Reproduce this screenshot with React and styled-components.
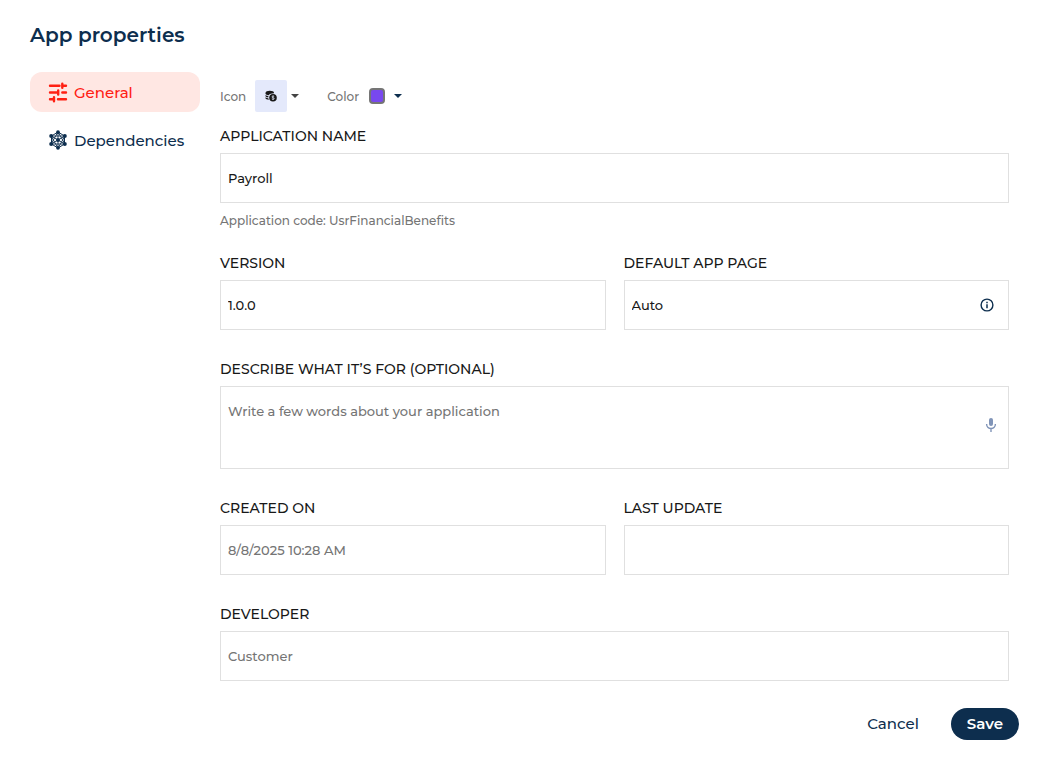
import React from 'react';
import styled, { createGlobalStyle } from 'styled-components';

const GlobalStyle = createGlobalStyle`
  *, *::before, *::after {
    box-sizing: border-box;
  }
  body {
    margin: 0;
    background: #fff;
  }
  body, button, input, select, textarea {
    font-family: Montserrat, Inter, sans-serif;
  }
`;

const Page = styled.div`
  padding: 20px 30px 28px;
  color: #0d2e4e;
`;

const Title = styled.h1`
  margin: 0 0 22px;
  font-size: 20px;
  line-height: 30px;
  font-weight: 600;
`;

const Body = styled.div`
  display: flex;
  gap: 20px;
  padding-right: 10px;
`;

const Nav = styled.nav`
  display: flex;
  flex: none;
  flex-direction: column;
  gap: 8px;
  width: 170px;
`;

const NavLink = styled.a`
  display: flex;
  align-items: center;
  gap: 4px;
  height: 40px;
  padding-left: 18px;
  border-radius: 12px;
  font-size: 15px;
  font-weight: 500;
  text-decoration: none;
  color: ${props => (props.$active ? '#ff2013' : '#0d2e4e')};
  background: ${props => (props.$active ? '#ffe7e3' : 'transparent')};
`;

const Form = styled.form`
  display: flex;
  flex: 1;
  flex-direction: column;
  gap: 22px;
  min-width: 0;
  padding-top: 8px;
`;

const Appearance = styled.div`
  display: flex;
  align-items: center;
  gap: 28px;
  height: 32px;
  margin-bottom: -7px;
`;

const Picker = styled.div`
  display: flex;
  align-items: center;
  gap: ${props => props.$gap}px;
  font-size: 12px;
  font-weight: 500;
  color: #757575;
`;

const PickerButton = styled.button`
  display: flex;
  align-items: center;
  gap: ${props => props.$gap}px;
  padding: 0;
  border: 0;
  background: none;
  color: ${props => props.$color};
`;

const IconTile = styled.span`
  display: flex;
  align-items: center;
  justify-content: center;
  width: 32px;
  height: 32px;
  border-radius: 2px;
  background: #e4e9fb;
`;

const Swatch = styled.span`
  width: 16px;
  height: 16px;
  border: 2px solid #757575;
  border-radius: 4px;
  background: #7848ee;
`;

const Columns = styled.div`
  display: grid;
  grid-template-columns: 1fr 1fr;
  gap: 18px;
`;

const Field = styled.div`
  display: flex;
  flex-direction: column;
  gap: 7px;
  padding-bottom: ${props => (props.$hinted ? 0 : 8)}px;
`;

const Label = styled.label`
  font-size: 14px;
  line-height: 19px;
  font-weight: 500;
  color: #181818;
`;

const Box = styled.div`
  display: flex;
  align-items: ${props => (props.$tall ? 'stretch' : 'center')};
  height: ${props => (props.$tall ? 83 : 50)}px;
  padding-right: ${props => (props.$tall ? 10 : 14)}px;
  border: 1px solid #e0e0e0;
`;

const control = `
  flex: 1;
  min-width: 0;
  height: 100%;
  margin: 0;
  border: 0;
  outline: 0;
  background: transparent;
  font-size: 13px;
  line-height: 18px;
  font-weight: 500;
  &::placeholder {
    color: #757575;
    opacity: 1;
  }
`;

const Input = styled.input`
  ${control}
  padding: 0 7px;
  color: ${props => (props.readOnly ? '#757575' : '#181818')};
`;

const Select = styled.select`
  ${control}
  appearance: none;
  padding: 0 7px;
  color: #181818;
`;

const TextArea = styled.textarea`
  ${control}
  padding: 15px 7px;
  resize: none;
  color: #181818;
`;

const BoxButton = styled.button`
  display: flex;
  flex: none;
  align-items: center;
  padding: 0;
  border: 0;
  background: none;
  color: #0d2e4e;
`;

const MicButton = styled(BoxButton)`
  align-items: flex-start;
  padding-top: 30px;
  color: #8094b8;
`;

const Hint = styled.div`
  font-size: 12px;
  line-height: 22px;
  font-weight: 500;
  color: #757575;
`;

const Footer = styled.footer`
  display: flex;
  justify-content: flex-end;
  gap: 16px;
  margin-top: 19px;
`;

const Button = styled.button`
  height: 32px;
  padding: 0 16px 2px;
  border: 0;
  border-radius: 16px;
  font-size: 15px;
  font-weight: ${props => (props.$primary ? 600 : 500)};
  color: ${props => (props.$primary ? '#fff' : '#0d2e4e')};
  background: ${props => (props.$primary ? '#0d2e4e' : 'transparent')};
`;

const TuneIcon = () => (
  <svg width="22" height="22" viewBox="0 -1 22 22" fill="none" stroke="currentColor" strokeWidth="2.4" strokeLinecap="round" aria-hidden="true">
    <path d="M2 3.700h9.500M14.300 1.700v4M14.500 3.700H18M2 10.500h8M10.200 8.500v4M14.300 10.500H18M2 17.300h3.500M6 15.300v4M10 17.300h8" />
  </svg>
);

const GraphIcon = () => (
  <svg width="22" height="22" viewBox="0 -1 22 22" fill="currentColor" stroke="currentColor" aria-hidden="true">
    <path d="M10 2 16.500 6v8L10 18 3.500 14V6z" fill="none" strokeWidth="1" />
    <path d="M10 2v16M3 6l14 8M17 6 3 14M10 2 3 14h14zM10 18 3 6h14z" fill="none" strokeWidth=".9" />
    <g stroke="none">
      <circle cx="10" cy="2.200" r="1.900" />
      <circle cx="16.800" cy="6" r="2" />
      <circle cx="16.800" cy="14" r="2" />
      <circle cx="10" cy="17.800" r="1.900" />
      <circle cx="3.200" cy="14" r="2" />
      <circle cx="3.200" cy="6" r="2" />
      <circle cx="10" cy="10" r="2" />
    </g>
  </svg>
);

const PayrollIcon = () => (
  <svg width="12" height="12" viewBox="0 0 12 12" aria-hidden="true">
    <path d="M.5 3C.5 1.500 2.500.8 4.800.8S9 1.500 9 2.700v.6C6.500 3.300 4.500 4 3.800 5.200 2 5 .5 4.500.5 3.700zM.5 5c.8.6 1.800.9 2.900 1L3.200 7.400C1.700 7.200.5 6.700.5 6zM.5 7.300c.8.6 1.700.8 2.800 1l.6 1.400C2 9.500.5 9 .5 8.300z" fill="#181818" />
    <circle cx="8" cy="7.700" r="3.800" fill="#181818" />
    <path d="M9.200 6.600c-.5-.7-2.300-.6-2.300.3 0 1.100 2.300.6 2.300 1.700 0 .9-1.800 1-2.400.3M8 5.400v4.600" fill="none" stroke="#e4e9fb" strokeWidth=".7" />
  </svg>
);

const Caret = () => (
  <svg width="8" height="4" viewBox="0 0 8 4" fill="currentColor" aria-hidden="true">
    <path d="M0 0h8L4 4z" />
  </svg>
);

const InfoIcon = () => (
  <svg width="14" height="14" viewBox="0 0 14 14" fill="none" stroke="currentColor" strokeWidth="1.400" aria-hidden="true">
    <circle cx="7" cy="7" r="5.900" />
    <path d="M7 6.300v4M7 3.700v1.500" strokeWidth="1.500" />
  </svg>
);

const MicIcon = () => (
  <svg width="14" height="16" viewBox="0 0 14 16" fill="none" stroke="currentColor" aria-hidden="true">
    <rect x="5" y="1" width="4" height="8" rx="2" fill="currentColor" stroke="none" />
    <path d="M2.600 7c0 6 8.800 6 8.800 0M7 11.500V15" strokeWidth="1.400" />
  </svg>
);

const TextField = ({ id, label, hint, ...rest }) => (
  <Field $hinted={!!hint}>
    <Label htmlFor={id}>{label}</Label>
    <Box>
      <Input id={id} type="text" {...rest} />
    </Box>
    {hint && <Hint>{hint}</Hint>}
  </Field>
);

const App = () => (
  <>
    <GlobalStyle />
    <Page>
      <Title>App properties</Title>
      <Body>
        <Nav>
          <NavLink href="#general" $active>
            <TuneIcon />
            General
          </NavLink>
          <NavLink href="#dependencies">
            <GraphIcon />
            Dependencies
          </NavLink>
        </Nav>
        <Form id="properties" onSubmit={e => e.preventDefault()}>
          <Appearance>
            <Picker $gap={9}>
              <span id="icon-label">Icon</span>
              <PickerButton type="button" aria-labelledby="icon-label" $gap={4} $color="#444">
                <IconTile><PayrollIcon /></IconTile>
                <Caret />
              </PickerButton>
            </Picker>
            <Picker $gap={10}>
              <span id="color-label">Color</span>
              <PickerButton type="button" aria-labelledby="color-label" $gap={9} $color="#0d2e4e">
                <Swatch />
                <Caret />
              </PickerButton>
            </Picker>
          </Appearance>
          <TextField
            id="name"
            label="APPLICATION NAME"
            defaultValue="Payroll"
            hint="Application code: UsrFinancialBenefits"
          />
          <Columns>
            <TextField id="version" label="VERSION" defaultValue="1.0.0" />
            <Field>
              <Label htmlFor="page">DEFAULT APP PAGE</Label>
              <Box>
                <Select id="page" defaultValue="auto">
                  <option value="auto">Auto</option>
                </Select>
                <BoxButton type="button" aria-label="About the default page"><InfoIcon /></BoxButton>
              </Box>
            </Field>
          </Columns>
          <Field>
            <Label htmlFor="description">DESCRIBE WHAT IT’S FOR (OPTIONAL)</Label>
            <Box $tall>
              <TextArea id="description" placeholder="Write a few words about your application" />
              <MicButton type="button" aria-label="Dictate"><MicIcon /></MicButton>
            </Box>
          </Field>
          <Columns>
            <TextField id="created" label="CREATED ON" defaultValue="8/8/2025 10:28 AM" readOnly />
            <TextField id="updated" label="LAST UPDATE" readOnly />
          </Columns>
          <TextField id="developer" label="DEVELOPER" defaultValue="Customer" readOnly />
        </Form>
      </Body>
      <Footer>
        <Button type="button">Cancel</Button>
        <Button type="submit" form="properties" $primary>Save</Button>
      </Footer>
    </Page>
  </>
);

export default App;
